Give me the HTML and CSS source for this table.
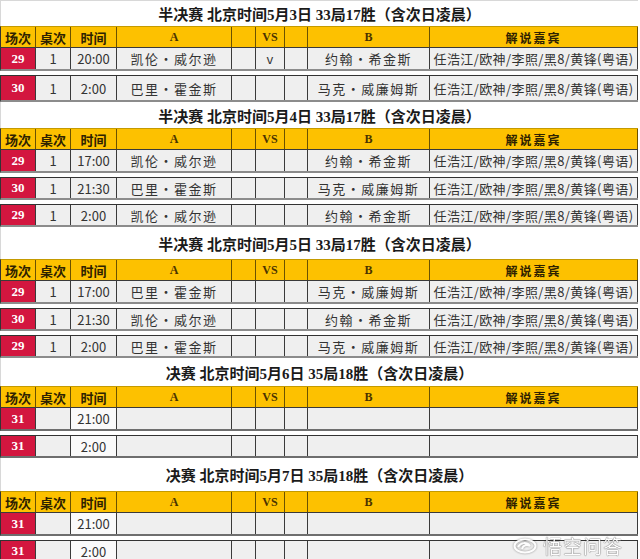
FILE: index.html
```html
<!DOCTYPE html>
<html lang="zh">
<head>
<meta charset="utf-8">
<title>赛程</title>
<link rel="stylesheet" href="styles.css">
</head>
<body>
<div class="page">
  <section class="sec">
    <div class="title t1">半决赛 北京时间5月3日 33局17胜（含次日凌晨）</div>
    <div class="row head">
      <div class="c">场次</div><div class="c">桌次</div><div class="c">时间</div><div class="c lat">A</div><div class="c"></div><div class="c lat">VS</div><div class="c"></div><div class="c lat">B</div><div class="c jx">解说嘉宾</div>
    </div>
    <div class="row data first">
      <div class="c no">29</div><div class="c">1</div><div class="c">20:00</div><div class="c name">凯伦·威尔逊</div><div class="c"></div><div class="c">v</div><div class="c"></div><div class="c name">约翰·希金斯</div><div class="c gst">任浩江/欧神/李照/黑8/黄锋(粤语)</div>
    </div>
    <div class="row data tall">
      <div class="c no">30</div><div class="c">1</div><div class="c">2:00</div><div class="c name">巴里·霍金斯</div><div class="c"></div><div class="c"></div><div class="c"></div><div class="c name">马克·威廉姆斯</div><div class="c gst">任浩江/欧神/李照/黑8/黄锋(粤语)</div>
    </div>
  </section>

  <section class="sec">
    <div class="title t2">半决赛 北京时间5月4日 33局17胜（含次日凌晨）</div>
    <div class="row head">
      <div class="c">场次</div><div class="c">桌次</div><div class="c">时间</div><div class="c lat">A</div><div class="c"></div><div class="c lat">VS</div><div class="c"></div><div class="c lat">B</div><div class="c jx">解说嘉宾</div>
    </div>
    <div class="row data first">
      <div class="c no">29</div><div class="c">1</div><div class="c">17:00</div><div class="c name">凯伦·威尔逊</div><div class="c"></div><div class="c"></div><div class="c"></div><div class="c name">约翰·希金斯</div><div class="c gst">任浩江/欧神/李照/黑8/黄锋(粤语)</div>
    </div>
    <div class="row data">
      <div class="c no">30</div><div class="c">1</div><div class="c">21:30</div><div class="c name">巴里·霍金斯</div><div class="c"></div><div class="c"></div><div class="c"></div><div class="c name">马克·威廉姆斯</div><div class="c gst">任浩江/欧神/李照/黑8/黄锋(粤语)</div>
    </div>
    <div class="row data">
      <div class="c no">29</div><div class="c">1</div><div class="c">2:00</div><div class="c name">凯伦·威尔逊</div><div class="c"></div><div class="c"></div><div class="c"></div><div class="c name">约翰·希金斯</div><div class="c gst">任浩江/欧神/李照/黑8/黄锋(粤语)</div>
    </div>
  </section>

  <section class="sec">
    <div class="title t3">半决赛 北京时间5月5日 33局17胜（含次日凌晨）</div>
    <div class="row head">
      <div class="c">场次</div><div class="c">桌次</div><div class="c">时间</div><div class="c lat">A</div><div class="c"></div><div class="c lat">VS</div><div class="c"></div><div class="c lat">B</div><div class="c jx">解说嘉宾</div>
    </div>
    <div class="row data first">
      <div class="c no">29</div><div class="c">1</div><div class="c">17:00</div><div class="c name">巴里·霍金斯</div><div class="c"></div><div class="c"></div><div class="c"></div><div class="c name">马克·威廉姆斯</div><div class="c gst">任浩江/欧神/李照/黑8/黄锋(粤语)</div>
    </div>
    <div class="row data">
      <div class="c no">30</div><div class="c">1</div><div class="c">21:30</div><div class="c name">凯伦·威尔逊</div><div class="c"></div><div class="c"></div><div class="c"></div><div class="c name">约翰·希金斯</div><div class="c gst">任浩江/欧神/李照/黑8/黄锋(粤语)</div>
    </div>
    <div class="row data">
      <div class="c no">29</div><div class="c">1</div><div class="c">2:00</div><div class="c name">巴里·霍金斯</div><div class="c"></div><div class="c"></div><div class="c"></div><div class="c name">马克·威廉姆斯</div><div class="c gst">任浩江/欧神/李照/黑8/黄锋(粤语)</div>
    </div>
  </section>

  <section class="sec">
    <div class="title t4">决赛 北京时间5月6日 35局18胜（含次日凌晨）</div>
    <div class="row head">
      <div class="c">场次</div><div class="c">桌次</div><div class="c">时间</div><div class="c lat">A</div><div class="c"></div><div class="c lat">VS</div><div class="c"></div><div class="c lat">B</div><div class="c jx">解说嘉宾</div>
    </div>
    <div class="row data first fin">
      <div class="c no">31</div><div class="c"></div><div class="c tm">21:00</div><div class="c"></div><div class="c"></div><div class="c"></div><div class="c"></div><div class="c"></div><div class="c"></div>
    </div>
    <div class="row data fin">
      <div class="c no">31</div><div class="c"></div><div class="c tm">2:00</div><div class="c"></div><div class="c"></div><div class="c"></div><div class="c"></div><div class="c"></div><div class="c"></div>
    </div>
  </section>

  <section class="sec">
    <div class="title t5">决赛 北京时间5月7日 35局18胜（含次日凌晨）</div>
    <div class="row head">
      <div class="c">场次</div><div class="c">桌次</div><div class="c">时间</div><div class="c lat">A</div><div class="c"></div><div class="c lat">VS</div><div class="c"></div><div class="c lat">B</div><div class="c jx">解说嘉宾</div>
    </div>
    <div class="row data first fin">
      <div class="c no">31</div><div class="c"></div><div class="c tm">21:00</div><div class="c"></div><div class="c"></div><div class="c"></div><div class="c"></div><div class="c"></div><div class="c"></div>
    </div>
    <div class="row data fin">
      <div class="c no">31</div><div class="c"></div><div class="c tm">2:00</div><div class="c"></div><div class="c"></div><div class="c"></div><div class="c"></div><div class="c"></div><div class="c"></div>
    </div>
  </section>

  <div class="mark">
    <svg class="mark-logo" width="24" height="16" viewBox="0 0 24 16">
      <ellipse cx="12" cy="8" rx="10.5" ry="6.5" fill="none" stroke="#fff" stroke-width="2"/>
      <path d="M5 9 C8 4 14 4 17 8 C14 6 10 7 9 11" fill="none" stroke="#fff" stroke-width="2"/>
    </svg>
    <span class="mark-text">悟空问答</span>
  </div>
</div>
</body>
</html>
```
FILE: styles.css
```css
* { box-sizing: border-box; }
body {
  margin: 0;
  background: #fff;
  font-family: "Noto Sans CJK SC", sans-serif;
  color: #333;
}
.page {
  position: relative;
  width: 640px;
  height: 559px;
  overflow: hidden;
}
.sec {
  width: 638px;
}
.title {
  display: flex;
  align-items: center;
  justify-content: center;
  font-family: "Liberation Serif", "Noto Sans CJK SC", serif;
  font-weight: 700;
  font-size: 15px;
  color: #1a1a1a;
  border-left: 1px solid #d8d8d8;
}
.t1 { height: 26px; border-top: 1px solid #d8d8d8; }
.t2 { height: 26px; }
.t3 { height: 32px; }
.t4 { height: 28px; }
.t5 { height: 33px; }

.row {
  display: grid;
  grid-template-columns: 35px 35px 46px 115px 24px 29px 23px 122px 1fr;
  border-left: 1px solid #333;
}
.c {
  display: flex;
  align-items: center;
  justify-content: center;
  border-right: 1px solid #3a3a3a;
  white-space: nowrap;
  overflow: hidden;
  font-size: 13px;
}
.head {
  height: 22px;
  background: #fdc100;
  border-top: 1px solid #c49a00;
  border-bottom: 1px solid #3a3a3a;
}
.head .c {
  font-weight: 700;
  font-size: 13px;
  color: #2e2200;
  border-right-color: #6b5200;
}
.head .lat {
  font-family: "Liberation Serif", serif;
  font-size: 12px;
  color: #4a3300;
}
.head .jx {
  font-size: 12px;
  letter-spacing: 2px;
}
.data {
  height: 23px;
  margin-top: 4px;
  background: #efefef;
  border-top: 1px solid #333;
  border-bottom: 2px solid #8c8c8c;
}
.data.first {
  margin-top: 0;
  border-top: 0;
}
.data.tall { height: 27px; }
.data.fin { border-bottom-color: #6e6e6e; }
.no {
  background: #d3163f;
  color: #fff;
  font-family: "Liberation Serif", serif;
  font-weight: 700;
  font-size: 13px;
}
.name {
  letter-spacing: 1.5px;
  color: #333;
}
.gst {
  letter-spacing: 0.4px;
  color: #333;
}
.tm { background: #fafafa; }

.mark {
  position: absolute;
  left: 513px;
  top: 532px;
  display: flex;
  align-items: center;
  gap: 6px;
  opacity: 0.9;
}
.mark-logo {
  filter: drop-shadow(0 0 1px rgba(0, 0, 0, 0.45));
}
.mark-text {
  font-size: 19px;
  color: #fff;
  letter-spacing: 1px;
  text-shadow: 0 0 1px rgba(0, 0, 0, 0.6), 0 0 1px rgba(0, 0, 0, 0.6);
}
```
